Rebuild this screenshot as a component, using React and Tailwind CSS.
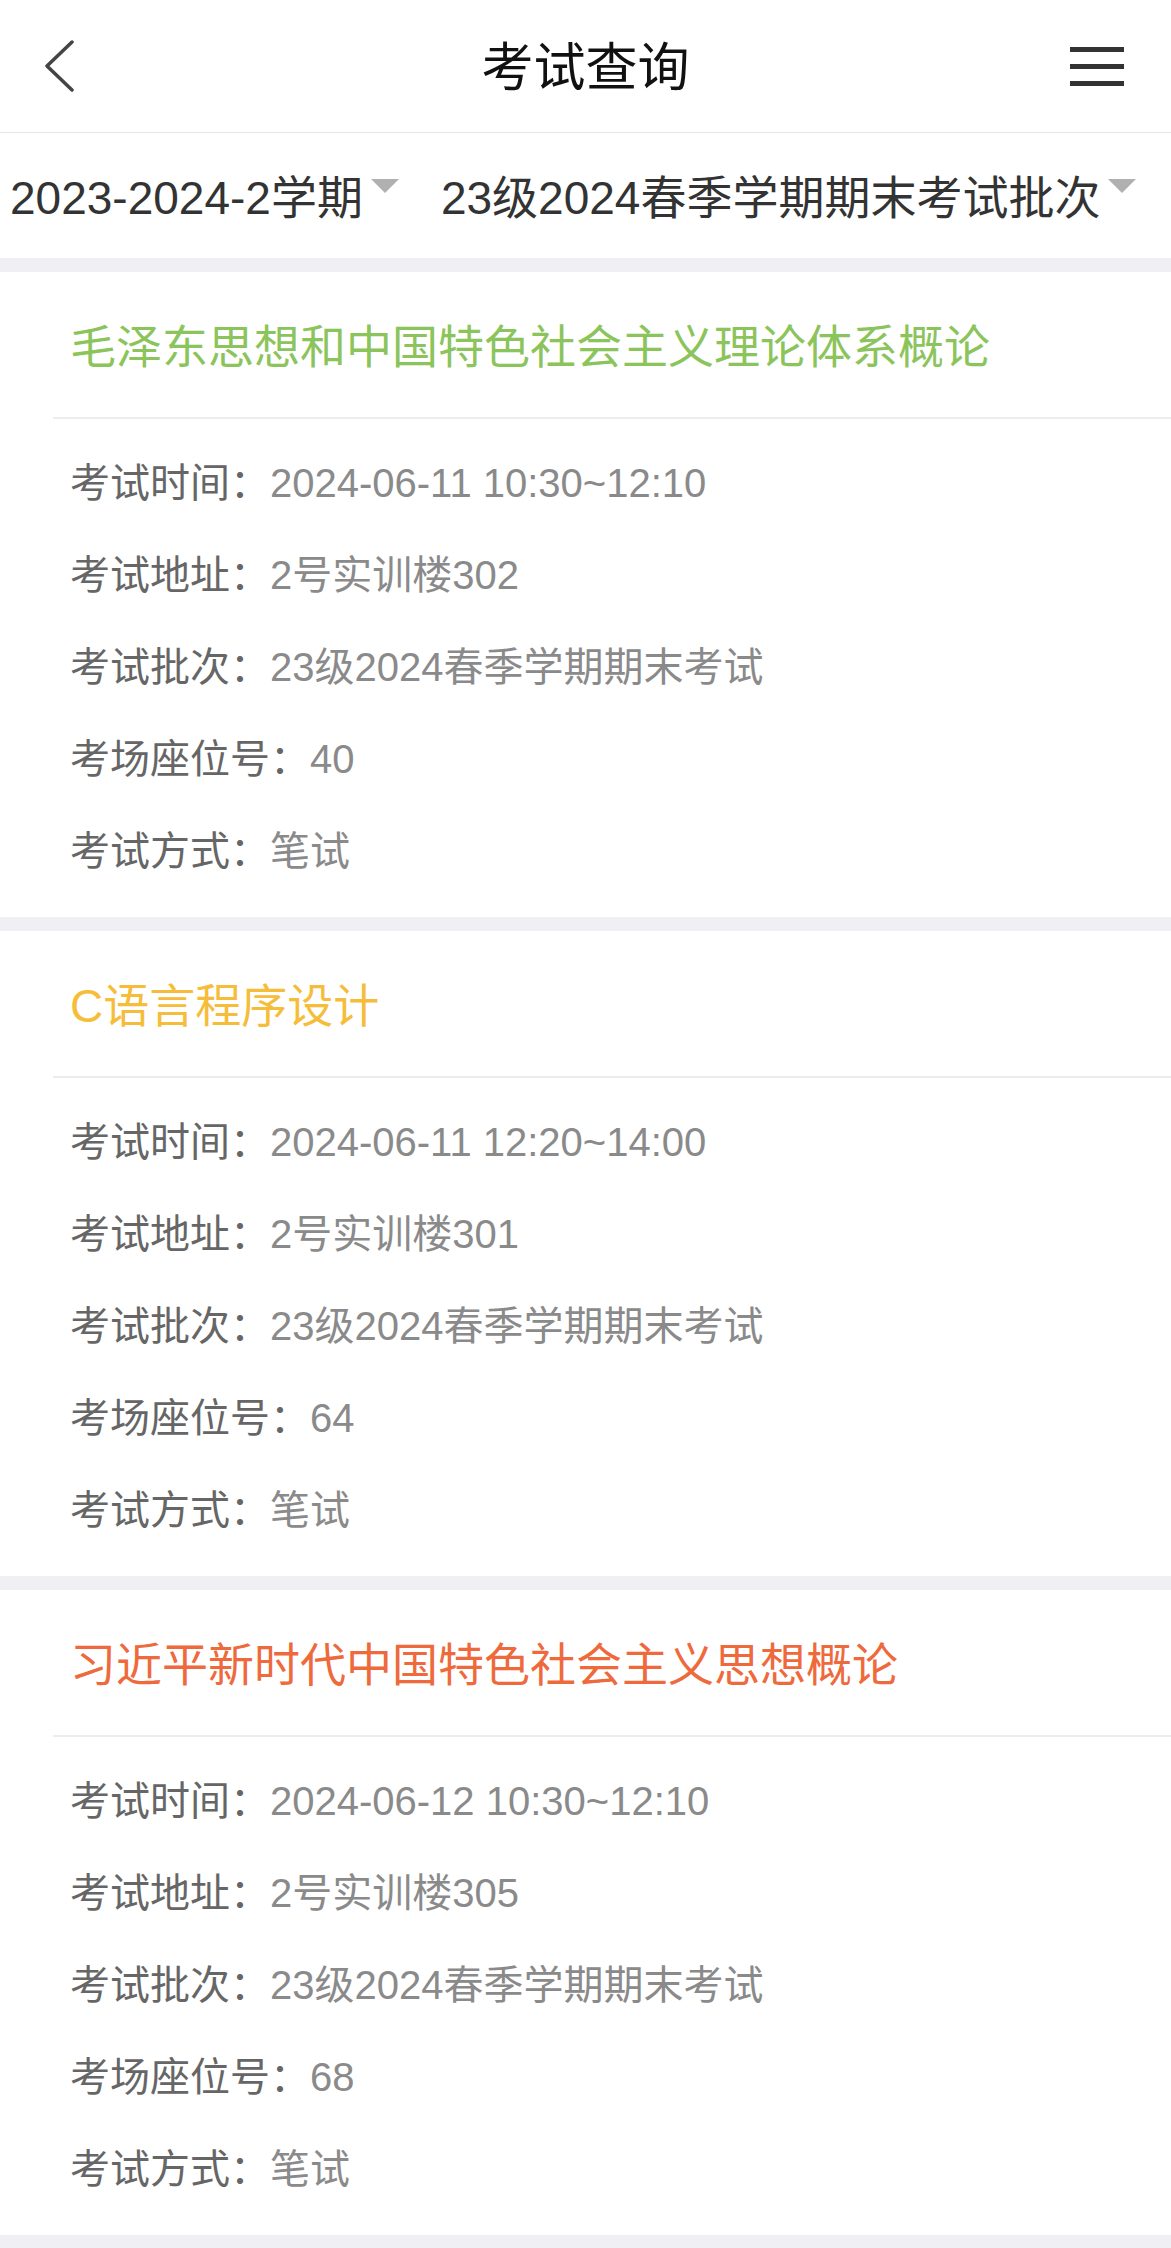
import React from "react";

const exams = [
  {
    id: 1,
    name: "毛泽东思想和中国特色社会主义理论体系概论",
    color: "text-[#8cc45c]",
    time: "2024-06-11 10:30~12:10",
    place: "2号实训楼302",
    seat: "40",
  },
  {
    id: 2,
    name: "C语言程序设计",
    color: "text-[#f5bd3a]",
    time: "2024-06-11 12:20~14:00",
    place: "2号实训楼301",
    seat: "64",
  },
  {
    id: 3,
    name: "习近平新时代中国特色社会主义思想概论",
    color: "text-[#ee6a3c]",
    time: "2024-06-12 10:30~12:10",
    place: "2号实训楼305",
    seat: "68",
  },
];

const Caret = () => (
  <span className="mt-[4px] ml-[8px] h-0 w-0 border-x-[14px] border-t-[14px] border-x-transparent border-t-[#b0b0b0]" />
);

const Row = ({ label, value }) => (
  <div className="flex h-[92px] items-center pl-[70px] text-[40px] leading-[40px]">
    <span className="text-[#666666]">{label}：</span>
    <span className="text-[#8a8a8a]">{value}</span>
  </div>
);

const App = () => {
  return (
    <div
      className="min-h-screen bg-[#efeff4]"
      style={{ fontFamily: '"Liberation Sans", "Noto Sans CJK SC", sans-serif' }}
    >
      {/* Header */}
      <div className="grid h-[133px] grid-cols-3 items-center border-b border-[#e6e6e6] bg-white">
        <div className="pl-[44px]">
          <svg width="30" height="52" viewBox="0 0 30 52" fill="none">
            <polyline
              points="28,2 3,26 28,50"
              stroke="#444444"
              strokeWidth="3.5"
              strokeLinecap="round"
              strokeLinejoin="round"
            />
          </svg>
        </div>
        <h1 className="pt-[3px] text-center text-[52px] leading-[52px] text-[#111111]">考试查询</h1>
        <div className="flex justify-end pr-[47px]">
          <div className="flex w-[54px] flex-col gap-[12px]">
            <span className="h-[5px] bg-[#333333]" />
            <span className="h-[5px] bg-[#333333]" />
            <span className="h-[5px] bg-[#333333]" />
          </div>
        </div>
      </div>

      {/* Filters */}
      <div className="flex h-[125px] items-center bg-white pt-[4px] pl-[10px] text-[46px] leading-[46px] text-[#333333]">
        <div className="flex items-start">
          <span>2023-2024-2学期</span>
          <Caret />
        </div>
        <div className="ml-[42px] flex items-start">
          <span>23级2024春季学期期末考试批次</span>
          <Caret />
        </div>
      </div>
      <div className="h-[14px]" />

      {/* Exam cards */}
      {exams.map((exam) => (
        <div key={exam.id}>
          <div className="bg-white">
            <div className={`pl-[70px] pt-[52px] pb-[47px] text-[46px] leading-[46px] ${exam.color}`}>
              {exam.name}
            </div>
            <div className="ml-[53px] h-[2px] bg-[#ededed]" />
            <div className="pt-[18px] pb-[20px]">
              <Row label="考试时间" value={exam.time} />
              <Row label="考试地址" value={exam.place} />
              <Row label="考试批次" value="23级2024春季学期期末考试" />
              <Row label="考场座位号" value={exam.seat} />
              <Row label="考试方式" value="笔试" />
            </div>
          </div>
          <div className="h-[14px]" />
        </div>
      ))}
    </div>
  );
};

export default App;
